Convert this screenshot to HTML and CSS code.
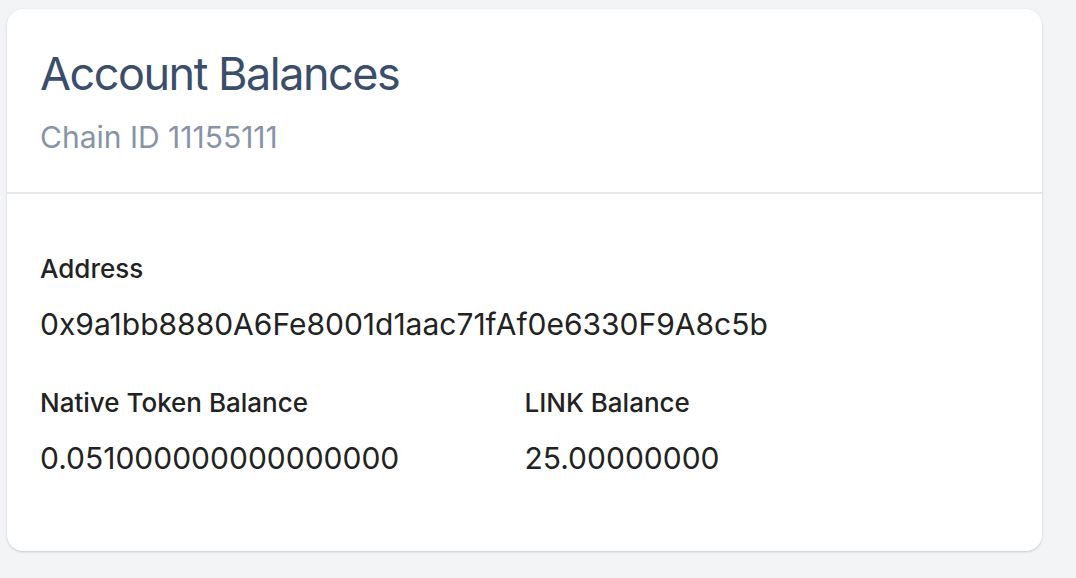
FILE: index.html
```html
<!DOCTYPE html>
<html lang="en">
<head>
<meta charset="utf-8">
<title>Account Balances</title>
<link rel="stylesheet" href="styles.css">
</head>
<body>
<main class="page">
  <section class="card">
    <header class="card-header">
      <h1 class="card-title">Account Balances</h1>
      <p class="card-subtitle">Chain ID 11155111</p>
    </header>
    <div class="card-body">
      <div class="field">
        <div class="field-label">Address</div>
        <div class="field-value">0x9a1bb8880A6Fe8001d1aac71fAf0e6330F9A8c5b</div>
      </div>
      <div class="field-grid">
        <div class="field">
          <div class="field-label">Native Token Balance</div>
          <div class="field-value">0.051000000000000000</div>
        </div>
        <div class="field">
          <div class="field-label">LINK Balance</div>
          <div class="field-value">25.00000000</div>
        </div>
      </div>
    </div>
  </section>
</main>
</body>
</html>
```

FILE: styles.css
```css
* { box-sizing: border-box; }
html, body { margin: 0; padding: 0; }
body {
  background: #f3f4f6;
  font-family: Inter, "Noto Sans", "Liberation Sans", sans-serif;
  color: #222;
}
.page {
  padding: 9px 34px 28px 7px;
}
.card {
  background: #fff;
  border-radius: 16px;
  box-shadow: 0 1px 3px rgba(0,0,0,0.12), 0 1px 2px rgba(0,0,0,0.06);
  overflow: hidden;
}
.card-header {
  padding: 37px 33px 36px;
  border-bottom: 2px solid #e5e7eb;
}
.card-title {
  margin: 0;
  font-size: 45px;
  line-height: 56px;
  font-weight: 400;
  letter-spacing: -1.5px;
  color: #3a4d6b;
}
.card-subtitle {
  margin: 16px 0 0;
  font-size: 30px;
  line-height: 38px;
  color: #8893a7;
}
.card-body {
  padding: 58px 33px 74px;
  display: flex;
  flex-direction: column;
  gap: 43px;
}
.field-label {
  font-size: 26px;
  line-height: 34px;
  font-weight: 500;
  color: #222;
}
.field-value {
  margin-top: 19px;
  font-size: 30px;
  line-height: 38px;
  color: #222;
}
.field-grid {
  display: grid;
  grid-template-columns: 1fr 1fr;
}
```
